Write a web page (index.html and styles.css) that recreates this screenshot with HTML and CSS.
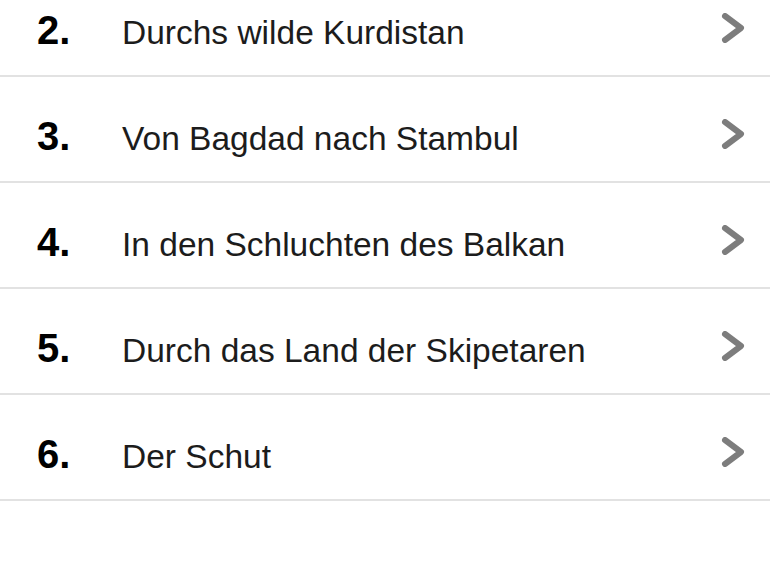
FILE: index.html
```html
<!DOCTYPE html>
<html lang="de">
<head>
<meta charset="utf-8">
<title>Liste</title>
<link rel="stylesheet" href="styles.css">
</head>
<body>
<ul class="list">
  <li class="row"><span class="num">2.</span><span class="title">Durchs wilde Kurdistan</span><svg class="chev" viewBox="0 0 24 30" width="24" height="30"><path d="M4 3 L20 15 L4 27" /></svg></li>
  <li class="row"><span class="num">3.</span><span class="title">Von Bagdad nach Stambul</span><svg class="chev" viewBox="0 0 24 30" width="24" height="30"><path d="M4 3 L20 15 L4 27" /></svg></li>
  <li class="row"><span class="num">4.</span><span class="title">In den Schluchten des Balkan</span><svg class="chev" viewBox="0 0 24 30" width="24" height="30"><path d="M4 3 L20 15 L4 27" /></svg></li>
  <li class="row"><span class="num">5.</span><span class="title">Durch das Land der Skipetaren</span><svg class="chev" viewBox="0 0 24 30" width="24" height="30"><path d="M4 3 L20 15 L4 27" /></svg></li>
  <li class="row"><span class="num">6.</span><span class="title">Der Schut</span><svg class="chev" viewBox="0 0 24 30" width="24" height="30"><path d="M4 3 L20 15 L4 27" /></svg></li>
</ul>
</body>
</html>
```
FILE: styles.css
```css
html, body {
  margin: 0;
  padding: 0;
  background: #ffffff;
}
body {
  font-family: "Liberation Sans", Arial, sans-serif;
  color: #1c1c1c;
  overflow: hidden;
}
.list {
  list-style: none;
  margin: -29px 0 0 0;
  padding: 0;
}
.row {
  display: flex;
  align-items: baseline;
  box-sizing: border-box;
  height: 106px;
  padding: 40px 0 0 37px;
  border-bottom: 2px solid #e2e2e2;
}
.num {
  width: 85px;
  font-size: 40px;
  font-weight: bold;
  color: #000;
  line-height: 38px;
}
.title {
  flex: 1;
  font-size: 33.5px;
  line-height: 38px;
}
.chev {
  align-self: flex-start;
  margin: 2px 25px 0 0;
  fill: none;
  stroke: #7d7d7d;
  stroke-width: 6;
  stroke-linecap: round;
  stroke-linejoin: round;
}
```
